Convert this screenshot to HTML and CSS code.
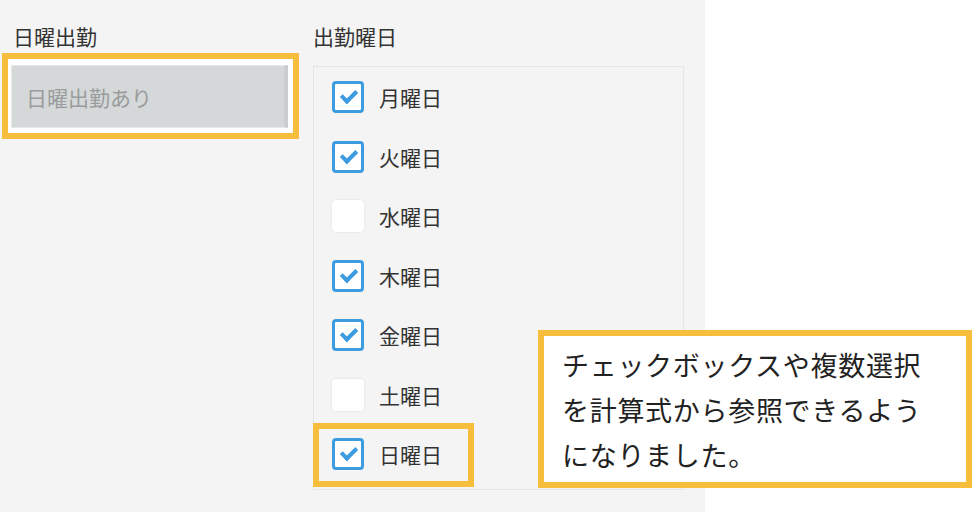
FILE: index.html
```html
<!DOCTYPE html>
<html lang="ja">
<head>
    <meta charset="UTF-8">
    <meta name="viewport" content="width=device-width, initial-scale=1.0">
    <title>出勤曜日</title>
    <link rel="stylesheet" href="styles.css">
</head>
<body>
    <div class="panel">
        <div class="field field-sunday">
            <div class="field-label">日曜出勤</div>
            <div class="mark-box">
                <div class="calc-input">日曜出勤あり</div>
            </div>
        </div>
        <div class="field field-days">
            <div class="field-label">出勤曜日</div>
            <div class="check-list">
                <div class="check-row"><span class="check on"></span><span>月曜日</span></div>
                <div class="check-row"><span class="check on"></span><span>火曜日</span></div>
                <div class="check-row"><span class="check"></span><span>水曜日</span></div>
                <div class="check-row"><span class="check on"></span><span>木曜日</span></div>
                <div class="check-row"><span class="check on"></span><span>金曜日</span></div>
                <div class="check-row"><span class="check"></span><span>土曜日</span></div>
                <div class="check-row marked"><span class="check on"></span><span>日曜日</span></div>
            </div>
        </div>
    </div>
    <div class="callout">
        チェックボックスや複数選択<br>
        を計算式から参照できるよう<br>
        になりました。
    </div>
</body>
</html>
```

FILE: styles.css
```css
body {
    margin: 0;
    padding: 0;
    background-color: #fff;
    font-family: "Noto Sans CJK JP", "Noto Sans", sans-serif;
    color: #333;
    position: relative;
    height: 512px;
    overflow: hidden;
}

.panel {
    width: 705px;
    height: 512px;
    background-color: #f4f4f4;
    display: flex;
    box-sizing: border-box;
    padding-top: 21px;
}

.field {
    display: flex;
    flex-direction: column;
}

.field-label {
    font-size: 21px;
    line-height: 30px;
    height: 30px;
    color: #333;
}

.field-sunday {
    margin-left: 2px;
    width: 297px;
}

.field-sunday .field-label {
    padding-left: 11px;
}

.mark-box {
    margin-top: 2px;
    height: 86px;
    box-sizing: border-box;
    border: 6px solid #f6be3c;
    background-color: #fff;
    padding: 6px 5px 5px 3px;
}

.calc-input {
    height: 63px;
    box-sizing: border-box;
    border: 1px solid #e6e8e8;
    border-right: 4px solid #c9cdcd;
    background-color: #d4d8d8;
    color: #9a9c9c;
    font-size: 21px;
    padding-left: 14px;
    display: flex;
    align-items: center;
}

.field-days {
    margin-left: 14px;
    width: 371px;
}

.check-list {
    margin-top: 15px;
    height: 424px;
    box-sizing: border-box;
    border: 1px solid #e2e6e6;
    padding: 14px 0 0 18px;
    display: flex;
    flex-direction: column;
    gap: 27.5px;
}

.check-row {
    display: flex;
    align-items: center;
    gap: 15px;
    height: 32px;
    font-size: 21px;
    color: #333;
    position: relative;
}

.check {
    width: 32px;
    height: 32px;
    box-sizing: border-box;
    border-radius: 4px;
    background-color: #fff;
    box-shadow: 0 0 2px rgba(0, 0, 0, 0.12);
    position: relative;
}

.check.on {
    border: 3px solid #3d9be0;
    box-shadow: none;
}

/* tick mark */
.check.on::after {
    content: "";
    position: absolute;
    top: 6px;
    left: 6px;
    width: 12px;
    height: 6px;
    border-left: 4px solid #3d9be0;
    border-bottom: 4px solid #3d9be0;
    transform: rotate(-45deg);
}

.check-row.marked::before {
    content: "";
    position: absolute;
    left: -19px;
    top: -15px;
    width: 161px;
    height: 64px;
    box-sizing: border-box;
    border: 6px solid #f6be3c;
}

.callout {
    position: absolute;
    left: 538px;
    top: 330px;
    width: 434px;
    height: 158px;
    box-sizing: border-box;
    border: 6px solid #f6be3c;
    background-color: #fff;
    padding: 6px 0 0 18px;
    font-size: 27px;
    letter-spacing: 0.7px;
    line-height: 45px;
    color: #222;
    white-space: nowrap;
}
```
